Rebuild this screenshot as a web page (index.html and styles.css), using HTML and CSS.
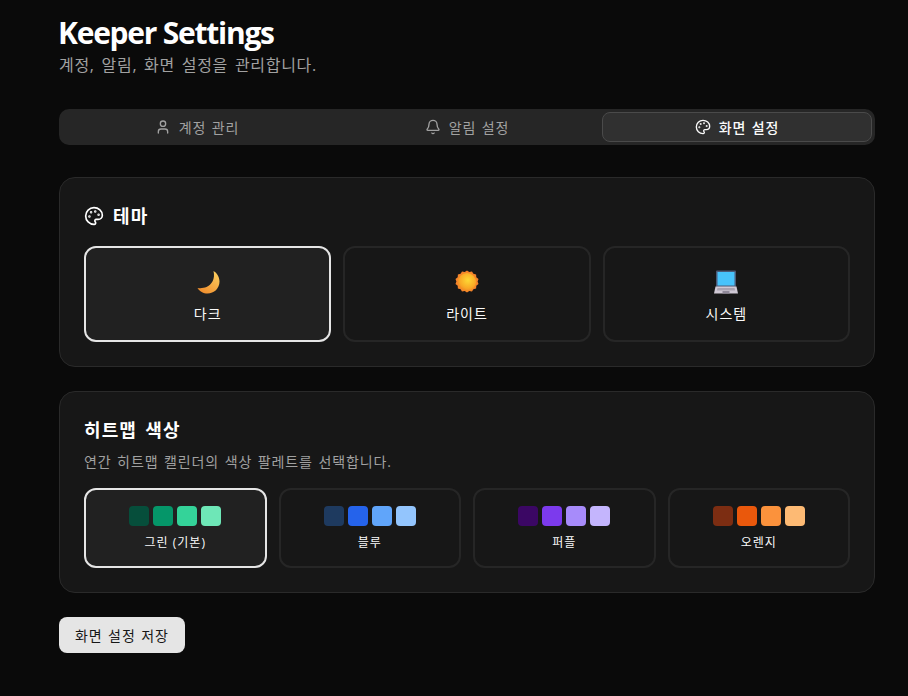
FILE: index.html
```html
<!DOCTYPE html>
<html lang="ko">
<head>
    <meta charset="UTF-8">
    <title>Keeper Settings</title>
    <link rel="stylesheet" href="styles.css">
</head>
<body>
    <div class="container">
        <header class="page-header">
            <h1>Keeper Settings</h1>
            <p>계정, 알림, 화면 설정을 관리합니다.</p>
        </header>

        <nav class="tabs">
            <div class="tab">
                <svg class="icon" viewBox="0 0 24 24"><path d="M19 21v-2a4 4 0 0 0-4-4H9a4 4 0 0 0-4 4v2"/><circle cx="12" cy="7" r="4"/></svg>
                계정 관리
            </div>
            <div class="tab">
                <svg class="icon" viewBox="0 0 24 24"><path d="M10.268 21a2 2 0 0 0 3.464 0"/><path d="M3.262 15.326A1 1 0 0 0 4 17h16a1 1 0 0 0 .74-1.673C19.41 13.956 18 12.499 18 8A6 6 0 0 0 6 8c0 4.499-1.411 5.956-2.738 7.326"/></svg>
                알림 설정
            </div>
            <div class="tab active">
                <svg class="icon" viewBox="0 0 24 24"><path d="M12 22a1 1 0 0 1 0-20 10 9 0 0 1 10 9 5 5 0 0 1-5 5h-2.25a1.75 1.75 0 0 0-1.4 2.8l.3.4a1.75 1.75 0 0 1-1.4 2.8z"/><circle class="dot" cx="13.5" cy="6.5" r=".5"/><circle class="dot" cx="17.5" cy="10.5" r=".5"/><circle class="dot" cx="6.5" cy="12.5" r=".5"/><circle class="dot" cx="8.5" cy="7.5" r=".5"/></svg>
                화면 설정
            </div>
        </nav>

        <section class="card">
            <h2 class="card-title">
                <svg class="icon icon-lg" viewBox="0 0 24 24"><path d="M12 22a1 1 0 0 1 0-20 10 9 0 0 1 10 9 5 5 0 0 1-5 5h-2.25a1.75 1.75 0 0 0-1.4 2.8l.3.4a1.75 1.75 0 0 1-1.4 2.8z"/><circle class="dot" cx="13.5" cy="6.5" r=".5"/><circle class="dot" cx="17.5" cy="10.5" r=".5"/><circle class="dot" cx="6.5" cy="12.5" r=".5"/><circle class="dot" cx="8.5" cy="7.5" r=".5"/></svg>
                테마
            </h2>
            <div class="theme-grid">
                <div class="option theme selected">
                    <svg class="emoji" viewBox="0 0 24 24">
                        <defs><linearGradient id="moon" x1="0.9" y1="0" x2="0.2" y2="1"><stop offset="0" stop-color="#fcd060"/><stop offset="1" stop-color="#f08c2c"/></linearGradient></defs>
                        <path fill="url(#moon)" d="M17.500 1C20.500 2.500 23.500 6.500 23.500 11.500C23.500 18.500 18 23.500 11.500 23.500C7.500 23.500 3.500 21.500 1.500 18C5 18.500 8 18 10.500 17C15.500 14.800 19.500 9 17.500 1Z"/>
                    </svg>
                    <span>다크</span>
                </div>
                <div class="option theme">
                    <svg class="emoji" viewBox="0 0 24 24">
                        <defs><radialGradient id="sun" cx="0.55" cy="0.4" r="0.6"><stop offset="0" stop-color="#fdd835"/><stop offset="0.75" stop-color="#f9a825"/><stop offset="1" stop-color="#f08a24"/></radialGradient></defs>
                        <path fill="#f5852a" d="M12 0.500l2.300 1.500 2.700-.6 1.400 2.400 2.700.6.200 2.800 2.200 1.700-.9 2.600.9 2.600-2.200 1.700-.2 2.800-2.700.6-1.400 2.400-2.700-.6-2.300 1.500-2.300-1.500-2.700.6-1.400-2.400-2.700-.6-.2-2.800-2.200-1.700.9-2.600-.9-2.600 2.200-1.700.2-2.800 2.700-.6 1.400-2.400 2.700.6z"/>
                        <circle fill="url(#sun)" cx="12" cy="12" r="9"/>
                    </svg>
                    <span>라이트</span>
                </div>
                <div class="option theme">
                    <svg class="emoji" viewBox="0 0 24 24">
                        <rect x="2" y="0.500" width="20" height="16.500" rx="1" fill="#4a5a78"/>
                        <rect x="3.500" y="2" width="17" height="13.500" fill="#47c3fb"/>
                        <path d="M1.500 16.500h21l1.500 7H0z" fill="#cfc8d4"/>
                        <path d="M3.500 18h17l.6 2.500H2.900z" fill="#a9a2b0"/>
                        <rect x="8.500" y="21" width="7" height="2.500" fill="#8f8898"/>
                    </svg>
                    <span>시스템</span>
                </div>
            </div>
        </section>

        <section class="card">
            <h2 class="card-title">히트맵 색상</h2>
            <p class="card-desc">연간 히트맵 캘린더의 색상 팔레트를 선택합니다.</p>
            <div class="palette-grid">
                <div class="option palette selected">
                    <div class="swatches">
                        <i class="swatch green-1"></i><i class="swatch green-2"></i><i class="swatch green-3"></i><i class="swatch green-4"></i>
                    </div>
                    <span>그린 (기본)</span>
                </div>
                <div class="option palette">
                    <div class="swatches">
                        <i class="swatch blue-1"></i><i class="swatch blue-2"></i><i class="swatch blue-3"></i><i class="swatch blue-4"></i>
                    </div>
                    <span>블루</span>
                </div>
                <div class="option palette">
                    <div class="swatches">
                        <i class="swatch purple-1"></i><i class="swatch purple-2"></i><i class="swatch purple-3"></i><i class="swatch purple-4"></i>
                    </div>
                    <span>퍼플</span>
                </div>
                <div class="option palette">
                    <div class="swatches">
                        <i class="swatch orange-1"></i><i class="swatch orange-2"></i><i class="swatch orange-3"></i><i class="swatch orange-4"></i>
                    </div>
                    <span>오렌지</span>
                </div>
            </div>
        </section>

        <button class="save" type="button">화면 설정 저장</button>
    </div>
</body>
</html>
```

FILE: styles.css
```css
* {
    box-sizing: border-box;
}

body {
    margin: 0;
    background-color: #0a0a0a;
    color: #fafafa;
    font-family: "Open Sans", "Noto Sans CJK KR", sans-serif;
}

.container {
    width: 816px;
    margin-left: 59px;
    padding-top: 15px;
}

.page-header h1 {
    margin: 0 0 0 -1px;
    font-size: 30px;
    line-height: 36px;
    font-weight: 700;
    letter-spacing: -1.25px;
    color: #fff;
}

.page-header p {
    margin: 2px 0 0;
    font-size: 16px;
    line-height: 24px;
    letter-spacing: 0.7px;
    word-spacing: 2px;
    color: #a1a1a1;
}

.tabs {
    display: grid;
    grid-template-columns: repeat(3, 1fr);
    height: 36px;
    margin-top: 32px;
    padding: 3px;
    border-radius: 10px;
    background-color: #262626;
}

.tab {
    display: flex;
    align-items: center;
    justify-content: center;
    gap: 8px;
    font-size: 14px;
    letter-spacing: 0.9px;
    word-spacing: 1px;
    color: #a1a1a1;
    border: 1px solid transparent;
    border-radius: 8px;
}

.tab.active {
    color: #fafafa;
    font-weight: 500;
    background-color: #303030;
    border-color: #4a4a4a;
}

.icon {
    width: 16px;
    height: 16px;
    fill: none;
    stroke: currentColor;
    stroke-width: 2;
    stroke-linecap: round;
    stroke-linejoin: round;
    flex-shrink: 0;
}

.icon-lg {
    width: 20px;
    height: 20px;
}

.dot {
    fill: currentColor;
}

.card {
    margin-top: 32px;
    padding: 24px;
    border: 1px solid #2a2a2a;
    border-radius: 16px;
    background-color: #171717;
}

.card + .card {
    margin-top: 24px;
}

.card-title {
    display: flex;
    align-items: center;
    gap: 9px;
    margin: 0;
    font-size: 18px;
    line-height: 28px;
    font-weight: 700;
    letter-spacing: 1.1px;
    word-spacing: 2.5px;
    color: #fff;
}

.card-desc {
    margin: 8px 0 0;
    font-size: 14px;
    line-height: 20px;
    letter-spacing: 0.9px;
    word-spacing: 1px;
    color: #a1a1a1;
}

.theme-grid {
    display: grid;
    grid-template-columns: repeat(3, 1fr);
    gap: 12px;
    margin-top: 16px;
}

.palette-grid {
    display: grid;
    grid-template-columns: repeat(4, 1fr);
    gap: 12px;
    margin-top: 16px;
}

.option {
    display: flex;
    flex-direction: column;
    align-items: center;
    border: 2px solid #262626;
    border-radius: 12px;
    color: #fafafa;
}

.option.selected {
    border-color: #e5e5e5;
    background-color: #212121;
}

.theme {
    height: 96px;
    padding-top: 22px;
    gap: 10px;
    font-size: 14px;
    line-height: 20px;
    letter-spacing: 1px;
}

.emoji {
    width: 24px;
    height: 24px;
}

.palette {
    height: 80px;
    padding-top: 16px;
    gap: 7px;
    font-size: 12px;
    line-height: 20px;
    letter-spacing: 1px;
}

.swatches {
    display: flex;
    gap: 4px;
}

.swatch {
    display: block;
    width: 20px;
    height: 20px;
    border-radius: 4px;
}

.green-1 { background-color: #064e3b; }
.green-2 { background-color: #059669; }
.green-3 { background-color: #34d399; }
.green-4 { background-color: #6ee7b7; }

.blue-1 { background-color: #1e3a5f; }
.blue-2 { background-color: #2563eb; }
.blue-3 { background-color: #60a5fa; }
.blue-4 { background-color: #93c5fd; }

.purple-1 { background-color: #3b0764; }
.purple-2 { background-color: #7c3aed; }
.purple-3 { background-color: #a78bfa; }
.purple-4 { background-color: #c4b5fd; }

.orange-1 { background-color: #7c2d12; }
.orange-2 { background-color: #ea580c; }
.orange-3 { background-color: #fb923c; }
.orange-4 { background-color: #fdba74; }

.save {
    display: block;
    height: 36px;
    margin-top: 24px;
    padding: 0 16px;
    border: 0;
    border-radius: 8px;
    background-color: #e5e5e5;
    color: #171717;
    font-family: inherit;
    font-size: 14px;
    letter-spacing: 0.9px;
    word-spacing: 1px;
}
```
